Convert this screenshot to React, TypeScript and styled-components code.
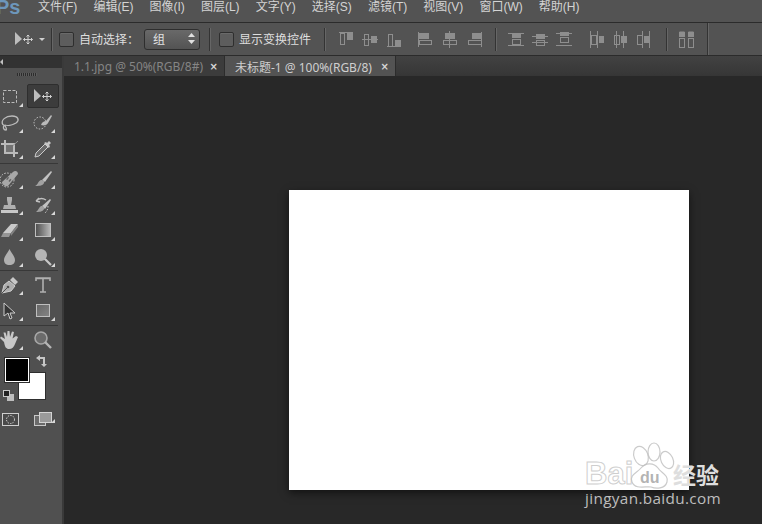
import React from 'react';
import styled, { createGlobalStyle } from 'styled-components';

const UI_FONT = '"Liberation Sans", "Noto Sans CJK SC", sans-serif';

const MENU_ITEMS = ['文件(F)', '编辑(E)', '图像(I)', '图层(L)', '文字(Y)', '选择(S)', '滤镜(T)', '视图(V)', '窗口(W)', '帮助(H)'];

const GlobalStyle = createGlobalStyle`
  html, body {
    margin: 0;
    padding: 0;
    background: #282828;
  }
`;

const Svg = styled.svg`
  display: block;
  flex: none;
  overflow: visible;
`;

const Window = styled.div`
  width: 762px;
  height: 524px;
  display: flex;
  flex-direction: column;
  overflow: hidden;
  position: relative;
  font-family: ${UI_FONT};
  background: #282828;
`;

const MenuBar = styled.div`
  height: 22px;
  flex: none;
  display: flex;
  align-items: center;
  background: #535353;
  border-bottom: 1px solid #2b2b2b;
`;

const Logo = styled.div`
  width: 38px;
  margin-left: -4px;
  margin-right: 4px;
  margin-top: -8px;
  font: bold 20px "Liberation Sans", sans-serif;
  color: #6d97bb;
`;

const MenuList = styled.div`
  display: flex;
  gap: 16.1px;
  margin-top: -12px;
`;

const MenuItem = styled.span`
  font-size: 12px;
  color: #d4d4d4;
  white-space: nowrap;
`;

const OptionsBar = styled.div`
  height: 32px;
  flex: none;
  display: flex;
  align-items: center;
  background: #535353;
  border-bottom: 1px solid #2b2b2b;
`;

const ToolPreset = styled.div`
  display: flex;
  align-items: center;
  gap: 5px;
  margin-left: 14px;
  width: 37px;
`;

const Caret = styled.span`
  width: 0;
  height: 0;
  border-left: 3px solid transparent;
  border-right: 3px solid transparent;
  border-top: 3px solid #d0d0d0;
`;

const OptionSep = styled.div<{ $before?: number; $after?: number; $tall?: boolean }>`
  width: 1px;
  height: ${({ $tall }) => ($tall ? '32px' : '23px')};
  background: #333;
  box-shadow: 1px 0 0 #666;
  margin: 0 ${({ $after = 0 }) => $after}px 0 ${({ $before = 0 }) => $before}px;
  flex: none;
`;

const Checkbox = styled.span`
  width: 13px;
  height: 13px;
  border: 1px solid #2e2e2e;
  border-radius: 2px;
  background: #5d5d5d;
  box-shadow: inset 0 1px 0 #6a6a6a;
  flex: none;
`;

const OptionLabel = styled.span<{ $width: number }>`
  width: ${({ $width }) => $width}px;
  margin-left: 5px;
  margin-bottom: 2px;
  font-size: 12px;
  color: #dedede;
  white-space: nowrap;
  flex: none;
`;

const SelectBox = styled.div`
  width: 56px;
  height: 21px;
  box-sizing: border-box;
  display: flex;
  align-items: center;
  justify-content: space-between;
  padding: 0 4px 2px 8px;
  border: 1px solid #2e2e2e;
  border-radius: 3px;
  background: linear-gradient(#696969, #535353);
  font-size: 12px;
  color: #e2e2e2;
  flex: none;
`;

const AlignSlot = styled.div<{ $left: number }>`
  margin-left: ${({ $left }) => $left}px;
  flex: none;
`;

const Workspace = styled.div`
  flex: 1;
  display: flex;
  min-height: 0;
`;

const ToolPanel = styled.aside`
  width: 62px;
  flex: none;
  display: flex;
  flex-direction: column;
  background: #505050;
  border-right: 2px solid #3a3a3a;
`;

const PanelHeader = styled.div`
  height: 12px;
  flex: none;
  display: flex;
  align-items: center;
  background: #323232;
`;

const CollapseArrow = styled.span`
  width: 0;
  height: 0;
  border-top: 3px solid transparent;
  border-bottom: 3px solid transparent;
  border-right: 3px solid #c0c0c0;
`;

const Grip = styled.div`
  height: 3px;
  width: 20px;
  margin: 5px 0 8px 17px;
  flex: none;
  background: repeating-linear-gradient(90deg, #2c2c2c 0 1px, #5c5c5c 1px 2px);
`;

const ToolGroup = styled.div<{ $rule: boolean; $top: number; $bottom: number }>`
  display: grid;
  grid-template-columns: 20px 32px;
  grid-auto-rows: 26px;
  column-gap: 7px;
  padding: ${({ $top }) => $top}px 0 ${({ $bottom }) => $bottom}px;
  border-bottom: ${({ $rule }) => ($rule ? '1px solid #383838' : 'none')};
  width: 58px;
`;

const ToolCell = styled.div<{ $active?: boolean }>`
  position: relative;
  display: flex;
  align-items: center;
  justify-content: center;
  box-sizing: border-box;
  border-radius: 2px;
  ${({ $active }) =>
    $active ? 'background: #3c3c3c; border: 1px solid #2e2e2e; height: 24px;' : ''}
`;

const ToolGlyph = styled(Svg)`
  opacity: 0.88;
`;

const Corner = styled.span<{ $right: number }>`
  position: absolute;
  right: ${({ $right }) => $right}px;
  bottom: 3px;
  width: 0;
  height: 0;
  border-left: 4px solid transparent;
  border-bottom: 4px solid #d8d8d8;
`;

const ColorWell = styled.div`
  position: relative;
  height: 48px;
  margin-top: 5px;
  flex: none;
`;

const Swatch = styled.div<{ $color: string; $left: number; $top: number; $size: number; $z: number }>`
  position: absolute;
  left: ${({ $left }) => $left}px;
  top: ${({ $top }) => $top}px;
  width: ${({ $size }) => $size}px;
  height: ${({ $size }) => $size}px;
  box-sizing: border-box;
  background: ${({ $color }) => $color};
  z-index: ${({ $z }) => $z};
  border: 1px solid #fff;
  box-shadow: 0 0 0 1px #2e2e2e;
`;

const SwapIcon = styled.div`
  position: absolute;
  left: 36px;
  top: -3px;
`;

const DefaultIcon = styled.div`
  position: absolute;
  left: 3px;
  top: 32px;
`;

const ModeRow = styled.div`
  display: grid;
  grid-template-columns: 20px 32px;
  column-gap: 7px;
  margin-top: 6px;
  height: 14px;
`;

const ModeCell = styled.div`
  position: relative;
  display: flex;
  align-items: center;
  justify-content: center;
`;

const DocArea = styled.main`
  flex: 1;
  min-width: 0;
  display: flex;
  flex-direction: column;
`;

const TabStrip = styled.div`
  height: 20px;
  flex: none;
  display: flex;
  background: linear-gradient(#424242, #363636);
`;

const Tab = styled.div<{ $active?: boolean; $width: number }>`
  width: ${({ $width }) => $width}px;
  box-sizing: border-box;
  display: flex;
  align-items: center;
  justify-content: space-between;
  padding: 1px 6px 0 10px;
  font-family: "Noto Sans", "Noto Sans CJK SC", sans-serif;
  font-size: 12px;
  white-space: nowrap;
  color: ${({ $active }) => ($active ? '#cfcfcf' : '#858585')};
  background: ${({ $active }) => ($active ? '#535353' : '#3c3c3c')};
  border-right: 1px solid #2c2c2c;
`;

const TabClose = styled.span`
  font: bold 10px "DejaVu Sans", sans-serif;
  color: #d8d8d8;
`;

const Canvas = styled.div`
  flex: 1;
  background: #282828;
  padding: 114px 0 0 225px;
`;

const DocumentSheet = styled.div`
  width: 400px;
  height: 300px;
  background: #fff;
  box-shadow: 0 3px 8px rgba(0, 0, 0, 0.55);
`;

const Watermark = styled.div`
  position: absolute;
  left: 585px;
  top: 441px;
  width: 140px;
  height: 70px;
  pointer-events: none;
`;

const BrandLatin = styled.span`
  position: absolute;
  left: 0;
  top: 15px;
  font: bold 31px "Liberation Sans", sans-serif;
  color: rgba(255, 255, 255, 0.25);
  -webkit-text-stroke: 1px rgba(190, 190, 190, 0.75);
`;

const BrandCjk = styled.span`
  position: absolute;
  left: 88px;
  top: 18px;
  font: bold 23px "Noto Sans CJK SC", sans-serif;
  line-height: 30px;
  color: #dedede;
  white-space: nowrap;
`;

const PawSlot = styled.div`
  position: absolute;
  left: 33px;
  top: 1px;
`;

const Domain = styled.div`
  position: absolute;
  left: 0;
  top: 47px;
  font: 15.3px "Open Sans", sans-serif;
  letter-spacing: 0.35px;
  color: #bdbdbd;
  white-space: nowrap;
`;

const G = '#c9c9c9';
const GD = '#9a9a9a';

const MoveIcon: React.FC = () => (
  <Svg width="20" height="16" viewBox="0 0 20 16">
    <path d="M1 1v13l7-6z" fill="#bdbdbd" />
    <path d="M14 4v9M9.5 8.5h9M12.5 5.5L14 4l1.5 1.5M12.5 11.5L14 13l1.5-1.5M11 7L9.5 8.5 11 10M17 7l1.5 1.5L17 10" stroke="#d0d0d0" fill="none" />
  </Svg>
);

type AlignBar = [number, number, number, number, boolean];

const AlignIcon: React.FC<{ lines: string; bars: AlignBar[] }> = ({ lines, bars }) => (
  <Svg width="17" height="17" viewBox="0 0 17 17">
    <path d={lines} stroke="#8e8e8e" fill="none" />
    {bars.map(([x, y, w, h, solid], i) => (
      <rect
        key={i}
        x={x + 0.5}
        y={y + 0.5}
        width={w}
        height={h}
        fill={solid ? '#8e8e8e' : 'none'}
        stroke="#8e8e8e"
      />
    ))}
  </Svg>
);

const ALIGN_ICONS: { left: number; sepBefore?: boolean; lines: string; bars: AlignBar[] }[] = [
  { left: 13, lines: 'M1 1.5h14', bars: [[2, 2, 4, 11, false], [9, 2, 5, 6, true]] },
  { left: 7, lines: 'M0 8.5h16', bars: [[2, 3, 4, 11, false], [9, 5, 5, 6, true]] },
  { left: 7, lines: 'M1 15.5h14', bars: [[2, 3, 4, 12, false], [9, 9, 5, 6, true]] },
  { left: 14, lines: 'M1.5 1v15', bars: [[2, 2, 9, 5, true], [2, 9, 12, 4, false]] },
  { left: 7, lines: 'M8.5 0v17', bars: [[4, 2, 9, 5, true], [2, 9, 13, 4, false]] },
  { left: 8, lines: 'M15.5 1v15', bars: [[6, 2, 9, 5, true], [2, 9, 13, 4, false]] },
  { left: 12, sepBefore: true, lines: 'M0 2.5h16M0 14.5h16', bars: [[4, 3, 8, 3, true], [4, 8, 8, 5, false]] },
  { left: 7, lines: 'M0 5.5h16M0 11.5h16', bars: [[4, 3, 8, 4, true], [4, 9, 8, 5, false]] },
  { left: 7, lines: 'M0 2.5h16M0 14.5h16', bars: [[4, 1, 8, 3, true], [4, 6, 8, 5, false]] },
  { left: 16, lines: 'M1.5 0v17M8.5 0v17', bars: [[2, 4, 5, 9, false], [10, 5, 4, 6, true]] },
  { left: 6, lines: 'M4.5 0v17M11.5 0v17', bars: [[2, 4, 5, 9, false], [9, 5, 5, 6, true]] },
  { left: 6, lines: 'M7.5 0v17M14.5 0v17', bars: [[2, 4, 5, 9, false], [9, 5, 5, 6, true]] },
];

const ToolIcon: React.FC<{ d: React.ReactNode }> = ({ d }) => (
  <ToolGlyph width="20" height="20" viewBox="0 0 20 20">
    {d}
  </ToolGlyph>
);

const marquee = <rect x="3.5" y="3.5" width="13" height="12" fill="none" stroke={G} strokeDasharray="3 1.5" />;
const lasso = (
  <path d="M3 12C0 7 6 3 12 3c6 0 8 4 4 7-3 2-8 3-11 2M4 12c-1 2-1 5 2 5 1 0 0-4-2-5z" fill="none" stroke={G} strokeWidth="1.3" />
);
const quickSelect = (
  <>
    <circle cx="7" cy="10" r="6" fill="none" stroke="#ddd" strokeDasharray="1.5 1.5" />
    <path d="M8 12c1-3 3-4 5-4l5-6 1 1-4 7c-1 2-4 3-7 2z" fill={G} />
  </>
);
const crop = (
  <>
    <path d="M5 1v13h13M1 5h13v13" fill="none" stroke={G} strokeWidth="2" />
    <path d="M6 13L18 2" stroke={GD} />
    <rect x="6" y="6" width="7" height="7" fill="#777" />
  </>
);
const eyedropper = (
  <>
    <path d="M12 5L3 14l-1 4 4-1 9-9z" fill="#6d6d6d" stroke="#ddd" />
    <path d="M11 4l5 5 1-2-1-1 2-2-2-2-2 2-1-1z" fill="#d6d6d6" />
  </>
);
const bandage = (
  <>
    <circle cx="7" cy="11" r="7" fill="none" stroke="#ddd" strokeDasharray="1.5 1.5" />
    <path d="M2 13L13 3c2-2 5-1 5 2L8 17c-2 1-6-1-6-4z" fill="#b5b5b5" />
    <path d="M7 9l5 4" stroke="#666" strokeWidth="3" strokeDasharray="1.5 1.5" />
  </>
);
const brush = (
  <>
    <path d="M9 11L18 2l1 1-7 10z" fill="#d2d2d2" />
    <path d="M8 11c2 0 4 1 3 3-1 3-6 3-9 3 3-1 3-5 6-6z" fill="#adadad" />
  </>
);
const stamp = (
  <>
    <path d="M7 2h5v3l-1 5h4l1 4H3l1-4h4L7 5z" fill="#bdbdbd" />
    <rect x="1" y="15" width="17" height="3" fill="#d8d8d8" />
  </>
);
const historyBrush = (
  <>
    <path d="M3 6c3-3 7-3 10-1M3 6l3-3M3 6l4 1" fill="none" stroke="#d0d0d0" strokeWidth="1.4" />
    <path d="M9 11l8-7 1 1-6 9z" fill="#d2d2d2" />
    <path d="M8 11c2 0 4 1 3 3-1 3-6 3-8 3 2-1 3-5 5-6z" fill="#adadad" />
    <path d="M15 11c0 3-1 5-3 7" stroke="#ddd" strokeDasharray="1.5 1.5" fill="none" />
  </>
);
const eraser = (
  <>
    <path d="M3 12L11 3h7l-7 9z" fill="#dadada" />
    <path d="M3 12h8l-2 4H1z" fill="#9f9f9f" />
    <path d="M11 12l7-9v3l-7 9z" fill="#8a8a8a" />
  </>
);
const gradientTool = (
  <>
    <defs>
      <linearGradient id="toolGrad" x1="0" x2="1">
        <stop offset="0" stopColor="#4d4d4d" />
        <stop offset="1" stopColor="#c8c8c8" />
      </linearGradient>
    </defs>
    <rect x="2.5" y="2.5" width="15" height="13" fill="url(#toolGrad)" stroke="#d0d0d0" />
  </>
);
const blur = <path d="M9.5 2C8 6 4 9 4 13c0 3 2 5 5.5 5s5.5-2 5.5-5c0-4-4-7-5.5-11z" fill="#bdbdbd" />;
const dodge = (
  <>
    <circle cx="8" cy="8" r="6" fill="#c4c4c4" />
    <path d="M12 12l6 6" stroke="#d8d8d8" strokeWidth="2.2" />
  </>
);
const pen = (
  <>
    <path d="M2 18l2-8 5-4 6 5-4 5z" fill="#bcbcbc" stroke="#e0e0e0" />
    <path d="M10 5l3-3 5 5-3 3z" fill="#d8d8d8" />
    <circle cx="8" cy="12" r="1.3" fill="#505050" />
    <path d="M2 18l5-5" stroke="#505050" />
  </>
);
const typeTool = (
  <path d="M3 6V3h14v3M10 3v14M7 17h6M3 3.5h14" fill="none" stroke="#bdbdbd" strokeWidth="1.6" />
);
const directSelect = <path d="M4 2v13l4-3 2 6 2-1-2-5h5z" fill="#333" stroke="#ddd" />;
const shapeRect = (
  <>
    <defs>
      <linearGradient id="toolRect" x1="0" x2="1" y1="0" y2="1">
        <stop offset="0" stopColor="#6a6a6a" />
        <stop offset="1" stopColor="#8c8c8c" />
      </linearGradient>
    </defs>
    <rect x="3.5" y="3.5" width="13" height="12" fill="url(#toolRect)" stroke="#cfcfcf" />
  </>
);
const hand = (
  <path d="M4 12L0 8l1-1.500 4 2.500-1.500-6.500h2L7 7l.5-6h2L10 7l2-5.500 2 .5-1.500 6.500L16 6l2 1-3 7c-1 3-3 5-6 5s-4-2-5-7z" fill="#d8d8d8" />
);
const zoomTool = (
  <>
    <circle cx="8" cy="8" r="6" fill="#6f6f6f" stroke="#b4b4b4" strokeWidth="1.6" />
    <path d="M12 12l6 6" stroke="#c4c4c4" strokeWidth="2.4" />
  </>
);

const TOOL_GROUPS: { top: number; bottom: number; rule: boolean; tools: (React.ReactNode | null)[] }[] = [
  { top: 0, bottom: 1, rule: true, tools: [marquee, null, lasso, quickSelect, crop, eyedropper] },
  { top: 2, bottom: 0, rule: true, tools: [bandage, brush, stamp, historyBrush, eraser, gradientTool, blur, dodge] },
  { top: 1, bottom: 1, rule: true, tools: [pen, typeTool, directSelect, shapeRect] },
  { top: 1, bottom: 0, rule: false, tools: [hand, zoomTool] },
];

const App: React.FC = () => {
  return (
    <>
      <GlobalStyle />
      <Window>
        <MenuBar>
          <Logo>Ps</Logo>
          <MenuList>
            {MENU_ITEMS.map((item) => (
              <MenuItem key={item}>{item}</MenuItem>
            ))}
          </MenuList>
        </MenuBar>

        <OptionsBar>
          <ToolPreset>
            <MoveIcon />
            <Caret />
          </ToolPreset>
          <OptionSep $after={7} />
          <Checkbox />
          <OptionLabel $width={65}>自动选择：</OptionLabel>
          <SelectBox>
            组
            <Svg width="7" height="11" viewBox="0 0 7 11">
              <path d="M3.5 0L7 4H0zM3.5 11L0 7h7z" fill="#e0e0e0" />
            </Svg>
          </SelectBox>
          <OptionSep $before={9} $after={9} />
          <Checkbox />
          <OptionLabel $width={85}>显示变换控件</OptionLabel>
          <OptionSep />
          {ALIGN_ICONS.map((icon, i) => (
            <React.Fragment key={i}>
              {icon.sepBefore && <OptionSep $before={12} />}
              <AlignSlot $left={icon.left}>
                <AlignIcon lines={icon.lines} bars={icon.bars} />
              </AlignSlot>
            </React.Fragment>
          ))}
          <OptionSep $before={14} />
          <AlignSlot $left={11}>
            <AlignIcon
              lines="M1.5 1h5M10.5 1h5"
              bars={[[1, 1, 5, 4, true], [1, 7, 5, 9, false], [10, 1, 5, 4, true], [10, 7, 5, 9, false]]}
            />
          </AlignSlot>
          <OptionSep $tall $before={12} />
        </OptionsBar>

        <Workspace>
          <ToolPanel>
            <PanelHeader>
              <CollapseArrow />
            </PanelHeader>
            <Grip />
            {TOOL_GROUPS.map((group, g) => (
              <ToolGroup key={g} $top={group.top} $bottom={group.bottom} $rule={group.rule}>
                {group.tools.map((icon, i) =>
                  icon === null ? (
                    <ToolCell key={i} $active>
                      <MoveIcon />
                    </ToolCell>
                  ) : (
                    <ToolCell key={i}>
                      <ToolIcon d={icon} />
                      {icon !== zoomTool && icon !== typeTool && <Corner $right={i % 2 === 0 ? -3 : 4} />}
                    </ToolCell>
                  ),
                )}
              </ToolGroup>
            ))}
            <ColorWell>
              <Swatch $color="#000" $left={5} $top={0} $size={24} $z={2} />
              <Swatch $color="#fff" $left={19} $top={15} $size={26} $z={1} />
              <SwapIcon>
                <Svg width="11" height="12" viewBox="0 0 11 12">
                  <path d="M4 0L0 3l4 3V4h3v5H5l3 3 3-3H9V2H4z" fill="#c6c6c6" />
                </Svg>
              </SwapIcon>
              <DefaultIcon>
                <Svg width="11" height="11" viewBox="0 0 11 11">
                  <rect x="4" y="4" width="7" height="7" fill="#bdbdbd" />
                  <rect x="0.5" y="0.5" width="6" height="6" fill="#222" stroke="#c8c8c8" />
                </Svg>
              </DefaultIcon>
            </ColorWell>
            <ModeRow>
              <ModeCell>
                <Svg width="17" height="13" viewBox="0 0 17 13">
                  <rect x="0.5" y="0.5" width="16" height="12" fill="#4a4a4a" stroke="#cfcfcf" />
                  <circle cx="8.5" cy="6.5" r="4" fill="none" stroke="#e6e6e6" strokeDasharray="1.3 1.3" />
                </Svg>
              </ModeCell>
              <ModeCell>
                <Svg width="18" height="14" viewBox="0 0 18 14">
                  <rect x="0.5" y="3.5" width="11" height="10" fill="#6b6b6b" stroke="#c8c8c8" />
                  <rect x="5.5" y="0.5" width="12" height="10" fill="#9a9a9a" stroke="#d4d4d4" />
                </Svg>
                <Corner $right={4} />
              </ModeCell>
            </ModeRow>
          </ToolPanel>

          <DocArea>
            <TabStrip>
              <Tab $width={161}>
                1.1.jpg @ 50%(RGB/8#)
                <TabClose>×</TabClose>
              </Tab>
              <Tab $active $width={171}>
                未标题-1 @ 100%(RGB/8)
                <TabClose>×</TabClose>
              </Tab>
            </TabStrip>
            <Canvas>
              <DocumentSheet />
            </Canvas>
          </DocArea>
        </Workspace>

        <Watermark>
          <BrandLatin>Bai</BrandLatin>
          <PawSlot>
            <Svg width="64" height="48" viewBox="0 0 64 48">
              <g fill="rgba(255,255,255,0.2)" stroke="rgba(190,190,190,0.8)" strokeWidth="1.2">
                <ellipse cx="23" cy="14" rx="7" ry="10" transform="rotate(-20 23 14)" />
                <ellipse cx="36" cy="10" rx="6" ry="9" />
                <ellipse cx="49" cy="18" rx="6" ry="9" transform="rotate(-25 49 18)" />
                <path d="M14 40c-3-7 5-9 9-14 5-6 13-5 17 0 3 5 11 7 9 14-2 7-11 7-16 5-5-1-16 3-19-5z" />
              </g>
              <text x="22" y="41" fontFamily="Liberation Sans" fontWeight="bold" fontSize="16" fill="rgba(170,170,170,0.9)">
                du
              </text>
            </Svg>
          </PawSlot>
          <BrandCjk>经验</BrandCjk>
          <Domain>jingyan.baidu.com</Domain>
        </Watermark>
      </Window>
    </>
  );
};

export default App;
